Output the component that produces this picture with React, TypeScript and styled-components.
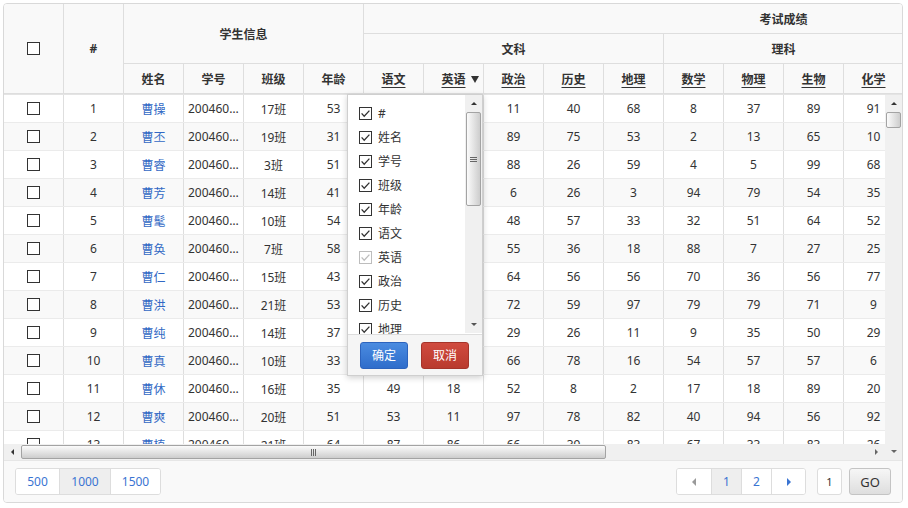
import React from "react";
import styled, { createGlobalStyle, css } from "styled-components";

const GlobalStyle = createGlobalStyle`
  html, body { margin: 0; padding: 0; background: #fff; }
  body {
    padding: 3px;
    font-family: "Noto Sans", "Noto Sans CJK SC", sans-serif;
    font-size: 12px;
    color: #333;
  }
  * { box-sizing: border-box; }
`;

const BORDER = "#dedede";

const Panel = styled.div`
  position: relative;
  width: 900px;
  height: 500px;
  border: 1px solid #d9d9d9;
  border-radius: 4px;
  overflow: hidden;
  display: flex;
  flex-direction: column;
  background: #fff;
`;

/* ---------- header ---------- */
const HeadWrap = styled.div`
  height: 90px;
  overflow: hidden;
  background: #f9f9f9;
  flex: none;
`;

const HeadGrid = styled.div`
  display: grid;
  grid-template-columns: repeat(20, 60px);
  grid-template-rows: repeat(3, 30px);
  width: 1200px;
`;

const HeadCell = styled.div<{ $c: number; $cs?: number; $r: number; $rs?: number; $sort?: boolean }>`
  grid-column: ${(p) => p.$c} / span ${(p) => p.$cs ?? 1};
  grid-row: ${(p) => p.$r} / span ${(p) => p.$rs ?? 1};
  border-right: 1px solid ${BORDER};
  border-bottom: 1px solid ${BORDER};
  display: flex;
  align-items: center;
  justify-content: center;
  position: relative;
  font-weight: bold;
  font-size: 12px;
  color: #333;
  ${(p) =>
    p.$sort &&
    css`
      text-decoration: underline;
      text-underline-offset: 3px;
    `}
`;

const SortMark = styled.span`
  position: absolute;
  right: 4px;
  top: 12px;
  width: 0;
  height: 0;
  border-left: 4px solid transparent;
  border-right: 4px solid transparent;
  border-top: 7px solid #333;
`;

/* ---------- body ---------- */
const BodyArea = styled.div`
  display: flex;
  height: 366px;
  flex: none;
  border-top: 1px solid #e4e4e4;
`;

const BodyMain = styled.div`
  width: 881px;
  display: flex;
  flex-direction: column;
`;

const Viewport = styled.div`
  height: 349px;
  overflow: hidden;
`;

const Row = styled.div<{ $striped: boolean }>`
  display: flex;
  height: 28px;
  width: 1200px;
  border-bottom: 1px solid #ebebeb;
  background: ${(p) => (p.$striped ? "#f9f9f9" : "#fff")};
`;

const Cell = styled.div<{ $align?: "left" | "center" }>`
  width: 60px;
  flex: none;
  border-right: 1px solid ${BORDER};
  display: flex;
  align-items: center;
  justify-content: ${(p) => (p.$align === "left" ? "flex-start" : "center")};
  padding: 0 4px;
  font-size: 12px;
  color: #333;
  white-space: nowrap;
  overflow: hidden;
`;

const Ellip = styled.span`
  overflow: hidden;
  text-overflow: ellipsis;
  white-space: nowrap;
  display: block;
  width: 100%;
`;

const NameLink = styled.a`
  color: #3168c4;
  text-decoration: none;
  cursor: pointer;
`;

const Box = styled.span`
  width: 13px;
  height: 13px;
  border: 1px solid #333;
  background: #fff;
  display: inline-block;
`;

/* ---------- scrollbars ---------- */
const Tri = styled.span<{ $dir: "up" | "down" | "left" | "right"; $s?: number; $color?: string }>`
  display: inline-block;
  width: 0;
  height: 0;
  ${({ $dir, $s = 3, $color = "#333" }) => {
    switch ($dir) {
      case "up":
        return css`
          border-left: ${$s}px solid transparent;
          border-right: ${$s}px solid transparent;
          border-bottom: ${$s}px solid ${$color};
        `;
      case "down":
        return css`
          border-left: ${$s}px solid transparent;
          border-right: ${$s}px solid transparent;
          border-top: ${$s}px solid ${$color};
        `;
      case "left":
        return css`
          border-top: ${$s}px solid transparent;
          border-bottom: ${$s}px solid transparent;
          border-right: ${$s}px solid ${$color};
        `;
      default:
        return css`
          border-top: ${$s}px solid transparent;
          border-bottom: ${$s}px solid transparent;
          border-left: ${$s}px solid ${$color};
        `;
    }
  }}
`;

const HScroll = styled.div`
  height: 16px;
  display: flex;
  align-items: center;
  background: #f0f0f0;
`;

const VScroll = styled.div<{ $h?: number }>`
  width: 17px;
  flex: none;
  display: flex;
  flex-direction: column;
  align-items: center;
  background: #f0f0f0;
  height: ${(p) => (p.$h ? `${p.$h}px` : "auto")};
`;

const ArrowBtn = styled.div<{ $vertical?: boolean }>`
  flex: none;
  width: 17px;
  height: ${(p) => (p.$vertical ? "17px" : "16px")};
  display: flex;
  align-items: center;
  justify-content: center;
`;

const Thumb = styled.div<{ $vertical?: boolean; $len: number }>`
  flex: none;
  border: 1px solid #a3a3a3;
  border-radius: 2px;
  display: flex;
  align-items: center;
  justify-content: center;
  ${(p) =>
    p.$vertical
      ? css`
          width: 15px;
          height: ${p.$len}px;
          background: linear-gradient(to right, #fbfbfb, #e2e2e2 55%, #cdcdcd);
        `
      : css`
          height: 14px;
          width: ${p.$len}px;
          background: linear-gradient(to bottom, #fbfbfb, #e2e2e2 55%, #cdcdcd);
        `}
`;

const Grip = styled.span<{ $vertical?: boolean }>`
  display: flex;
  flex-direction: ${(p) => (p.$vertical ? "column" : "row")};
  gap: 1px;
  & > i {
    display: block;
    background: #666;
    ${(p) =>
      p.$vertical
        ? css`
            width: 7px;
            height: 1px;
          `
        : css`
            width: 1px;
            height: 7px;
          `}
  }
`;

const Spacer = styled.div`
  flex: 1;
`;

/* ---------- footer ---------- */
const Footer = styled.div`
  height: 42px;
  flex: none;
  display: flex;
  align-items: center;
  justify-content: space-between;
  padding: 0 11px 0 11px;
  background: #f9f9f9;
  border-top: 1px solid #e6e6e6;
`;

const Group = styled.div`
  display: inline-flex;
  height: 27px;
  border: 1px solid #dddddd;
  border-radius: 3px;
  background: #fff;
  overflow: hidden;
`;

const GroupBtn = styled.div<{ $w: number; $active?: boolean; $muted?: boolean }>`
  width: ${(p) => p.$w}px;
  display: flex;
  align-items: center;
  justify-content: center;
  font-size: 12px;
  color: ${(p) => (p.$muted ? "#999" : "#3a74d2")};
  background: ${(p) => (p.$active ? "#eeeeee" : "#fff")};
  & + & {
    border-left: 1px solid #dddddd;
  }
`;

const RightTools = styled.div`
  display: flex;
  align-items: center;
`;

const PageInput = styled.div`
  width: 25px;
  height: 27px;
  margin-left: 11px;
  border: 1px solid #dddddd;
  border-radius: 3px;
  background: #fff;
  display: flex;
  align-items: center;
  justify-content: center;
  font-size: 11px;
  color: #333;
`;

const GoBtn = styled.div`
  width: 42px;
  height: 27px;
  margin-left: 7px;
  border: 1px solid #c4c4c4;
  border-radius: 3px;
  background: linear-gradient(to bottom, #f6f6f6, #dedede);
  display: flex;
  align-items: center;
  justify-content: center;
  font-size: 13px;
  color: #333;
`;

/* ---------- column chooser dropdown ---------- */
const Dropdown = styled.div`
  position: absolute;
  left: 343px;
  top: 90px;
  width: 136px;
  height: 282px;
  background: #fff;
  border: 1px solid #cfcfcf;
  box-shadow: 0 2px 6px rgba(0, 0, 0, 0.18);
  display: flex;
  flex-direction: column;
`;

const DropBody = styled.div`
  height: 239px;
  display: flex;
  flex: none;
`;

const DropList = styled.div`
  flex: 1;
  overflow: hidden;
  padding-top: 6px;
`;

const DropItem = styled.div`
  height: 24px;
  display: flex;
  align-items: center;
  gap: 6px;
  padding-left: 11px;
  font-size: 12px;
  color: #333;
`;

const DropFooter = styled.div`
  flex: 1;
  background: #f5f5f5;
  border-top: 1px solid #dddddd;
  display: flex;
  align-items: center;
  gap: 13px;
  padding-left: 12px;
`;

const ActionBtn = styled.div<{ $variant: "primary" | "danger" }>`
  width: 48px;
  height: 27px;
  border-radius: 3px;
  display: flex;
  align-items: center;
  justify-content: center;
  font-size: 12px;
  color: #fff;
  ${(p) =>
    p.$variant === "primary"
      ? css`
          background: linear-gradient(to bottom, #4a8be0, #2f6dcb);
          border: 1px solid #2c63bd;
        `
      : css`
          background: linear-gradient(to bottom, #d04b3f, #b93a2e);
          border: 1px solid #a5342a;
        `}
`;

const CheckIcon = ({ disabled = false }: { disabled?: boolean }) => {
  const c = disabled ? "#bdbdbd" : "#333";
  return (
    <svg width="13" height="13" viewBox="0 0 13 13">
      <rect x="0.5" y="0.5" width="12" height="12" fill="#fff" stroke={c} />
      <path d="M2.6 6.4 L5.2 9.2 L10.4 3.6" fill="none" stroke={c} strokeWidth="1.3" />
    </svg>
  );
};

/* ---------- data ---------- */
type Student = {
  name: string;
  id: string;
  cls: number;
  age: number;
  scores: (number | null)[]; // 语文 英语 政治 历史 地理 数学 物理 生物 化学
};

const students: Student[] = [
  { name: "曹操", id: "20046000101", cls: 17, age: 53, scores: [null, null, 11, 40, 68, 8, 37, 89, 91] },
  { name: "曹丕", id: "20046000102", cls: 19, age: 31, scores: [null, null, 89, 75, 53, 2, 13, 65, 10] },
  { name: "曹睿", id: "20046000103", cls: 3, age: 51, scores: [null, null, 88, 26, 59, 4, 5, 99, 68] },
  { name: "曹芳", id: "20046000104", cls: 14, age: 41, scores: [null, null, 6, 26, 3, 94, 79, 54, 35] },
  { name: "曹髦", id: "20046000105", cls: 10, age: 54, scores: [null, null, 48, 57, 33, 32, 51, 64, 52] },
  { name: "曹奂", id: "20046000106", cls: 7, age: 58, scores: [null, null, 55, 36, 18, 88, 7, 27, 25] },
  { name: "曹仁", id: "20046000107", cls: 15, age: 43, scores: [null, null, 64, 56, 56, 70, 36, 56, 77] },
  { name: "曹洪", id: "20046000108", cls: 21, age: 53, scores: [null, null, 72, 59, 97, 79, 79, 71, 9] },
  { name: "曹纯", id: "20046000109", cls: 14, age: 37, scores: [null, null, 29, 26, 11, 9, 35, 50, 29] },
  { name: "曹真", id: "20046000110", cls: 10, age: 33, scores: [null, null, 66, 78, 16, 54, 57, 57, 6] },
  { name: "曹休", id: "20046000111", cls: 16, age: 35, scores: [49, 18, 52, 8, 2, 17, 18, 89, 20] },
  { name: "曹爽", id: "20046000112", cls: 20, age: 51, scores: [53, 11, 97, 78, 82, 40, 94, 56, 92] },
  { name: "曹植", id: "20046000113", cls: 21, age: 64, scores: [87, 86, 66, 39, 83, 67, 33, 83, 26] },
];

const subHeads = ["姓名", "学号", "班级", "年龄"];
const scoreHeads = ["语文", "英语", "政治", "历史", "地理", "数学", "物理", "生物", "化学"];
const EXTRA_COLS = 5;

const chooser = ["#", "姓名", "学号", "班级", "年龄", "语文", "英语", "政治", "历史", "地理", "数学", "物理", "生物"];

export default function App() {
  return (
    <>
      <GlobalStyle />
      <Panel>
        <HeadWrap>
          <HeadGrid>
            <HeadCell $c={1} $r={1} $rs={3}>
              <Box />
            </HeadCell>
            <HeadCell $c={2} $r={1} $rs={3}>
              #
            </HeadCell>
            <HeadCell $c={3} $cs={4} $r={1} $rs={2}>
              学生信息
            </HeadCell>
            {subHeads.map((h, i) => (
              <HeadCell key={h} $c={3 + i} $r={3}>
                {h}
              </HeadCell>
            ))}
            <HeadCell $c={7} $cs={14} $r={1}>
              考试成绩
            </HeadCell>
            <HeadCell $c={7} $cs={5} $r={2}>
              文科
            </HeadCell>
            <HeadCell $c={12} $cs={4} $r={2}>
              理科
            </HeadCell>
            <HeadCell $c={16} $cs={EXTRA_COLS} $r={2} />
            {scoreHeads.map((h, i) => (
              <HeadCell key={h} $c={7 + i} $r={3} $sort>
                {h}
                {h === "英语" && <SortMark />}
              </HeadCell>
            ))}
            {Array.from({ length: EXTRA_COLS }).map((_, i) => (
              <HeadCell key={`x${i}`} $c={16 + i} $r={3} />
            ))}
          </HeadGrid>
        </HeadWrap>

        <BodyArea>
          <BodyMain>
            <Viewport>
              {students.map((s, i) => (
                <Row key={s.id} $striped={i % 2 === 1}>
                  <Cell>
                    <Box />
                  </Cell>
                  <Cell>{i + 1}</Cell>
                  <Cell>
                    <NameLink>{s.name}</NameLink>
                  </Cell>
                  <Cell $align="left">
                    <Ellip>{s.id}</Ellip>
                  </Cell>
                  <Cell>{s.cls}班</Cell>
                  <Cell>{s.age}</Cell>
                  {s.scores.map((v, k) => (
                    <Cell key={k}>{v ?? ""}</Cell>
                  ))}
                  {Array.from({ length: EXTRA_COLS }).map((_, k) => (
                    <Cell key={`e${k}`} />
                  ))}
                </Row>
              ))}
            </Viewport>
            <HScroll>
              <ArrowBtn>
                <Tri $dir="left" $s={3} />
              </ArrowBtn>
              <Thumb $len={585}>
                <Grip>
                  <i />
                  <i />
                  <i />
                </Grip>
              </Thumb>
              <Spacer />
              <ArrowBtn>
                <Tri $dir="right" $s={3} $color="#666" />
              </ArrowBtn>
            </HScroll>
          </BodyMain>
          <VScroll>
            <ArrowBtn $vertical>
              <Tri $dir="up" $s={3} />
            </ArrowBtn>
            <Thumb $vertical $len={16} />
            <Spacer />
            <ArrowBtn $vertical>
              <Tri $dir="down" $s={3} $color="#666" />
            </ArrowBtn>
          </VScroll>
        </BodyArea>

        <Footer>
          <Group>
            <GroupBtn $w={43}>500</GroupBtn>
            <GroupBtn $w={51} $active>
              1000
            </GroupBtn>
            <GroupBtn $w={50}>1500</GroupBtn>
          </Group>
          <RightTools>
            <Group>
              <GroupBtn $w={34} $muted>
                <Tri $dir="left" $s={4} $color="#9a9a9a" />
              </GroupBtn>
              <GroupBtn $w={30} $active>
                1
              </GroupBtn>
              <GroupBtn $w={30}>2</GroupBtn>
              <GroupBtn $w={34}>
                <Tri $dir="right" $s={4} $color="#3a74d2" />
              </GroupBtn>
            </Group>
            <PageInput>1</PageInput>
            <GoBtn>GO</GoBtn>
          </RightTools>
        </Footer>

        <Dropdown>
          <DropBody>
            <DropList>
              {chooser.map((c) => (
                <DropItem key={c}>
                  <CheckIcon disabled={c === "英语"} />
                  {c}
                </DropItem>
              ))}
            </DropList>
            <VScroll $h={238}>
              <ArrowBtn $vertical>
                <Tri $dir="up" $s={3} />
              </ArrowBtn>
              <Thumb $vertical $len={94}>
                <Grip $vertical>
                  <i />
                  <i />
                  <i />
                </Grip>
              </Thumb>
              <Spacer />
              <ArrowBtn $vertical>
                <Tri $dir="down" $s={3} $color="#555" />
              </ArrowBtn>
            </VScroll>
          </DropBody>
          <DropFooter>
            <ActionBtn $variant="primary">确定</ActionBtn>
            <ActionBtn $variant="danger">取消</ActionBtn>
          </DropFooter>
        </Dropdown>
      </Panel>
    </>
  );
}
